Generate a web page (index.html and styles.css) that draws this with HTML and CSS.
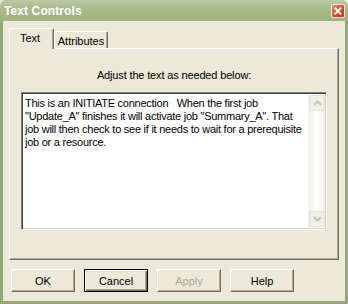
FILE: index.html
```html
<!DOCTYPE html>
<html>
<head>
<meta charset="utf-8">
<link rel="stylesheet" href="styles.css">
</head>
<body>
<div class="window">
  <div class="titlebar">
    <span class="title">Text Controls</span>
    <span class="close"><svg width="14" height="14" viewBox="0 0 14 14"><path d="M4 4 L10 10 M10 4 L4 10" stroke="#fff" stroke-width="2.2" stroke-linecap="square"/></svg></span>
  </div>
  <div class="frame">
    <div class="tabs">
      <div class="tab active">Text</div>
      <div class="tab">Attributes</div>
    </div>
    <div class="panel">
      <div class="label">Adjust the text as needed below:</div>
      <div class="textbox">
        <div class="text">
          <div class="line">This is an INITIATE connection   When the first job</div>
          <div class="line">"Update_A" finishes it will activate job "Summary_A". That</div>
          <div class="line">job will then check to see if it needs to wait for a prerequisite</div>
          <div class="line">job or a resource.</div>
        </div>
        <div class="scrollbar">
          <div class="arrow"><svg width="9" height="6" viewBox="0 0 9 6"><path d="M1 5 L4.5 1.5 L8 5" fill="none" stroke="#c6c3b5" stroke-width="2"/></svg></div>
          <div class="track"></div>
          <div class="arrow"><svg width="9" height="6" viewBox="0 0 9 6"><path d="M1 1 L4.5 4.5 L8 1" fill="none" stroke="#c6c3b5" stroke-width="2"/></svg></div>
        </div>
      </div>
    </div>
    <div class="buttons">
      <div class="btn">OK</div>
      <div class="btn default">Cancel</div>
      <div class="btn disabled">Apply</div>
      <div class="btn">Help</div>
    </div>
  </div>
</div>
</body>
</html>
```

FILE: styles.css
```css
* { box-sizing: border-box; }
html, body { margin: 0; padding: 0; }
body {
  width: 348px;
  height: 304px;
  overflow: hidden;
  font-family: "Liberation Sans", Arial, sans-serif;
  font-size: 11px;
  color: #000;
}
.window {
  width: 348px;
  height: 304px;
  display: flex;
  flex-direction: column;
  background: #ece9d8;
}
.titlebar {
  height: 21px;
  flex: none;
  display: flex;
  align-items: center;
  justify-content: space-between;
  padding: 0 3px 0 4px;
  background: linear-gradient(#bccaa6, #a9bb8c 40%, #9fb282);
  border-radius: 6px 6px 0 0;
}
.title {
  color: #fff;
  font-weight: bold;
  font-size: 12px;
  letter-spacing: 0.1px;
  padding-top: 1px;
}
.close {
  width: 14px;
  height: 14px;
  display: flex;
  align-items: center;
  justify-content: center;
  background: linear-gradient(135deg, #e88a6e, #d04a2a 60%, #c23c20);
  border: 1px solid #f2e8e0;
  border-radius: 2px;
  margin-top: 1px;
}
.close svg { display: block; }
.frame {
  flex: 1;
  display: flex;
  flex-direction: column;
  border-left: 3px solid #94a878;
  border-right: 3px solid #94a878;
  border-bottom: 3px solid #94a878;
  padding: 7px 6px 0 6px;
}
.tabs {
  display: flex;
  align-items: flex-end;
  height: 20px;
  position: relative;
  z-index: 2;
}
.tab {
  height: 17px;
  padding: 0 4px;
  display: flex;
  align-items: center;
  border-top: 1px solid #fff;
  border-left: 1px solid #fff;
  border-right: 1px solid #716f64;
  box-shadow: inset -1px 0 #aca899;
  background: #ece9d8;
  border-radius: 2px 2px 0 0;
}
.tab.active {
  height: 21px;
  margin-bottom: -1px;
  width: 45px;
  padding: 0 0 3px 10px;
}
.tab:not(.active) { padding-top: 2px; width: 54px; justify-content: center; }
.panel {
  height: 212px;
  border-left: 1px solid #fff;
  border-top: 1px solid #fff;
  border-right: 1px solid #716f64;
  border-bottom: 1px solid #716f64;
  box-shadow: inset -1px -1px #aca899;
  display: flex;
  flex-direction: column;
  align-items: center;
  padding-top: 20px;
}
.label {
  height: 13px;
  line-height: 13px;
  margin-bottom: 10px;
  letter-spacing: -0.15px;
}
.textbox {
  width: 306px;
  height: 138px;
  background: #fff;
  border: 1px solid;
  border-color: #808080 #fff #fff #808080;
  box-shadow: inset 1px 1px #404040, inset -1px -1px #d4d0c8;
  display: flex;
  padding: 2px 1px 2px 2px;
}
.text {
  flex: 1;
  min-width: 0;
  padding: 2px 0 0 1px;
  line-height: 13px;
  letter-spacing: -0.25px;
}
.line { white-space: pre; }
.scrollbar {
  width: 17px;
  flex: none;
  display: flex;
  flex-direction: column;
  background: linear-gradient(90deg, #f3f1ec, #fefefe 50%, #f0eee6);
  border-left: 1px solid #f5f4ef;
}
.arrow {
  height: 16px;
  flex: none;
  display: flex;
  align-items: center;
  justify-content: center;
  background: #f1efe6;
  border: 1px solid #e4e2d8;
  border-radius: 2px;
}
.arrow svg { display: block; }
.track { flex: 1; }
.buttons {
  display: flex;
  gap: 9px;
  padding: 9px 0 0 2px;
}
.btn {
  width: 64px;
  height: 23px;
  display: flex;
  align-items: center;
  justify-content: center;
  border: 1px solid;
  border-color: #fff #716f64 #716f64 #fff;
  box-shadow: inset -1px -1px #aca899;
  padding-top: 1px;
}
.btn.default {
  border: 1px solid #000;
  box-shadow: inset 1px 1px #fff, inset -1px -1px #716f64, inset -2px -2px #aca899;
}
.btn.disabled { color: #aca899; }
```
